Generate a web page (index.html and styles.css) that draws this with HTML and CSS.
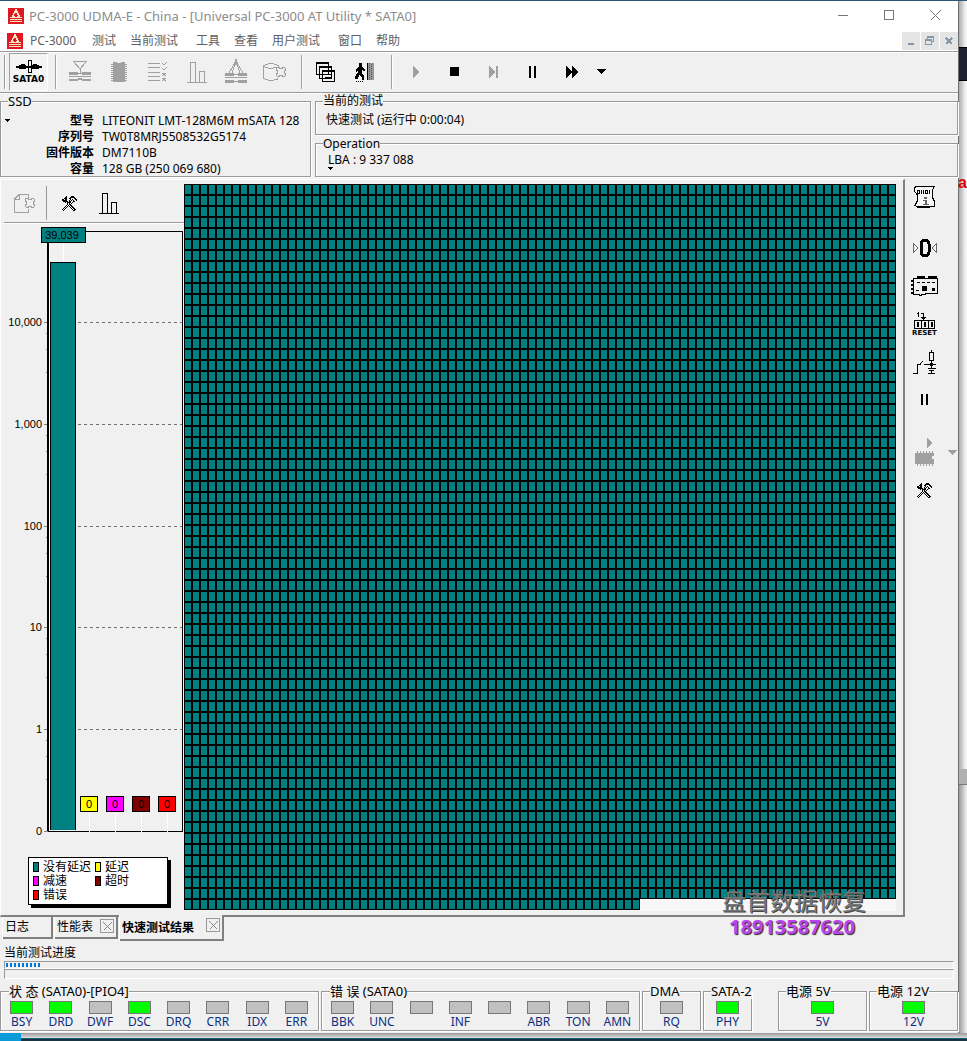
FILE: index.html
```html
<!DOCTYPE html>
<html lang="zh-CN">
<head>
<meta charset="utf-8">
<title>PC-3000 UDMA-E</title>
<link rel="stylesheet" href="styles.css">
</head>
<body>
<svg class="defs" aria-hidden="true">
  <symbol id="logo" viewBox="0 0 16 16">
    <path fill="#e01820" d="M0 0h16v16H0z"/>
    <path fill="none" stroke="#fbe6c8" stroke-width="1.6" d="M8 2L4.5 8.5M8 2l3.500 6.500M8 1v3"/>
    <path fill="#fbe6c8" d="M2 9h5v1H2zM9 9h5v1H9zM4 8h3v1H4zM9 8h3v1H9zM2 11h12v1H2zM2 13h12v1H2zM7 9h2v1H7z"/>
  </symbol>
  <symbol id="tools" viewBox="0 0 15 15">
    <path fill="none" stroke="currentColor" d="M4 .5h1M9 .5h3M3 1.500h2M8 1.500h5M2 2.500h3M7 2.500h2M12 2.500h2M0 3.500h2M3 3.500h2M8 3.500h1M10 3.500h1M13 3.500h2M0 4.500h5M7 4.500h1M9 4.500h1M11 4.500h1M14 4.500h1M1 5.500h5M7 5.500h2M11 5.500h2M3 6.500h1M5 6.500h4M10 6.500h1M5 7.500h1M7 7.500h1M9 7.500h1M5 8.500h1M7 8.500h2M4 9.500h1M6 9.500h1M8 9.500h2M3 10.500h1M5 10.500h1M7 10.500h1M9 10.500h2M2 11.500h1M4 11.500h1M8 11.500h1M10 11.500h2M1 12.500h1M3 12.500h1M9 12.500h1M11 12.500h2M0 13.500h1M2 13.500h1M10 13.500h1M12 13.500h2M1 14.500h1M11 14.500h2"/>
  </symbol>
  <symbol id="bars" viewBox="0 0 20 21">
    <path fill="none" stroke="currentColor" d="M0 20.500h20M3.500 20V.5h5V20M12.500 20V9.500h5V20"/>
  </symbol>
</svg>

<div class="desktop">
<div class="window">
  <header class="title">
    <svg class="logo"><use href="#logo"/></svg>
    <h1>PC-3000 UDMA-E - China - [Universal PC-3000 AT Utility * SATA0]</h1>
    <div class="caption">
      <button aria-label="Minimize"><svg width="11" height="11"><path d="M0 5.500h10"/></svg></button>
      <button aria-label="Maximize"><svg width="11" height="11"><path d="M.5.5h9v9h-9z"/></svg></button>
      <button aria-label="Close"><svg width="11" height="11"><path d="M.5.5l10 10M10.500.5l-10 10"/></svg></button>
    </div>
  </header>
  <nav class="menu">
    <svg class="logo"><use href="#logo"/></svg>
    <button class="app">PC-3000</button><button>测试</button><button class="long">当前测试</button><button>工具</button><button>查看</button><button class="long">用户测试</button><button>窗口</button><button>帮助</button>
    <div class="mdi">
      <button aria-label="Minimize child"><svg width="12" height="12"><path stroke-width="2" d="M3 9h6"/></svg></button>
      <button aria-label="Restore child"><svg width="12" height="12"><path d="M3.500 4V2.500h6v4H8M3 1.500h7M1.500 5.500h6v4h-6zM1 4.500h7"/></svg></button>
      <button aria-label="Close child"><svg width="12" height="12"><path stroke-width="2" d="M3 3l6 6M9 3L3 9"/></svg></button>
    </div>
  </nav>

  <div class="toolbar">
    <span class="grip"></span>
    <button class="port on">
      <svg width="26" height="13" viewBox="0 0 26 13"><path fill="#000" d="M0 6h26v2H0zM3 5h7v1H3zM3 8h7v1H3zM5 4h4v1H5zM16 5h7v1h-7zM16 8h7v1h-7zM17 4h4v1h-4zM12 0h1v13h-1zM15 0h1v13h-1zM12 0h4v1h-4zM12 12h4v1h-4z"/></svg>
      <span>SATA0</span>
    </button>
    <span class="sep"></span>
    <button class="off" aria-label="Heads"><svg width="24" height="22"><path fill="none" stroke="currentColor" d="M5 .5h14M6 1l6 7 6-7M12 8v4"/><path fill="currentColor" d="M1 11h9v3H1zM14 11h9v3h-9zM10 12h4v1h-4zM1 15h22v1H1zM1 18h9v2H1zM14 18h9v2h-9zM10 17h4v2h-4z"/></svg></button>
    <button class="off" aria-label="Chip"><svg width="18" height="22"><path fill="currentColor" d="M3 1h4v1h4V1h4v20H3z"/><path stroke="currentColor" stroke-dasharray="1 1" stroke-width="2" d="M2 3v17M16 3v17"/></svg></button>
    <button class="off" aria-label="Check list"><svg width="21" height="20"><path fill="none" stroke="currentColor" d="M1 1.500h12M1 5.500h12M1 10.500h12M1 14.500h12M1 18.500h12M15 1l2 2 3-3M15 6l2 2 3-3M15 11l4 3M19 11l-4 3M15 16l4 3M19 16l-4 3"/></svg></button>
    <button class="off" aria-label="Graph"><svg width="20" height="21"><use href="#bars"/></svg></button>
    <button class="off" aria-label="Compass"><svg width="24" height="26"><path fill="none" stroke="currentColor" d="M11 4L5 14M13 4l6 10M11.500 4L8 14M12.500 4L16 14"/><path fill="currentColor" d="M11 0h2v3h-2zM10 3h4v3h-4zM1 14h9v3H1zM14 14h9v3h-9zM10 15h4v1h-4zM1 18h22v1H1zM1 21h9v3H1zM14 21h9v3h-9zM10 22h4v1h-4z"/></svg></button>
    <button class="off" aria-label="Disk image"><svg width="25" height="18"><path fill="none" stroke="currentColor" d="M1.500 3v12c3 3 12 3 15 .5M1.500 3c3-3 12-3 15 0v1M1.500 3c3 3 9 3 12 1"/><path fill="#f0f0f0" stroke="currentColor" d="M14 5l2-1 3 2 3-2 2 2-2 3 2 3-2 2-3-2-3 2-2-2 2-3-2-3z"/></svg></button>
    <span class="sep"></span>
    <button aria-label="Windows"><svg width="20" height="20"><path fill="#f0f0f0" stroke="#000" d="M.5.5h12v12H.5zM3.500 4.500h12v12h-12zM6.500 8.500h12v11h-12z"/><path stroke="#000" stroke-width="2" d="M0 1h13M3 5h13M6 9h13"/><path stroke="#000" d="M9 12.500h7M9 15.500h7"/></svg></button>
    <button aria-label="Exit"><svg width="20" height="20"><path fill="#000" d="M4 1h3v4h1l2 3-1 1-2-1v3l2 3v4H7v-3l-3-2-1 4H0v-2l3-5V8L1 10V7l3-3z"/><path stroke="#000" stroke-dasharray="1 1" d="M1 19.500h8"/><path fill="#999" d="M12 1h7v17h-7z"/><path stroke="#000" d="M12.500 1v17"/><path stroke="#555" stroke-dasharray="1 1" d="M14.500 1v17M16.500 2v16"/></svg></button>
    <span class="sep"></span>
    <button class="off" aria-label="Start"><svg width="8" height="12"><path fill="currentColor" d="M1 0l6 6-6 6z"/></svg></button>
    <button aria-label="Stop"><svg width="10" height="10"><path fill="#000" d="M0 0h9v9H0z"/></svg></button>
    <button class="off" aria-label="Step"><svg width="10" height="12"><path fill="currentColor" d="M0 0l6 6-6 6zM7 0h2v12H7z"/></svg></button>
    <button aria-label="Pause"><svg width="8" height="12"><path fill="#000" d="M0 0h2v12H0zM5 0h2v12H5z"/></svg></button>
    <button aria-label="Skip"><svg width="12" height="12"><path fill="#000" d="M0 0l6 6-6 6zM6 0l6 6-6 6z"/></svg></button>
    <button class="drop" aria-label="More"><svg width="10" height="6"><path fill="#000" d="M0 0h10L5 5z"/></svg></button>
  </div>

  <section class="info">
    <fieldset class="drive">
      <legend class="latin">SSD</legend>
      <svg class="tri" width="6" height="4"><path d="M0 0h5L2.500 3z"/></svg>
      <dl>
        <dt>型号</dt><dd>LITEONIT LMT-128M6M mSATA 128</dd>
        <dt>序列号</dt><dd>TW0T8MRJ5508532G5174</dd>
        <dt>固件版本</dt><dd>DM7110B</dd>
        <dt>容量</dt><dd>128 GB (250 069 680)</dd>
      </dl>
    </fieldset>
    <div class="jobs">
      <fieldset><legend>当前的测试</legend><p>快速测试 (运行中 0:00:04)</p></fieldset>
      <fieldset><legend>Operation</legend><p class="lba">LBA : 9 337 088</p><svg class="tri" width="6" height="4"><path d="M0 0h5L2.500 3z"/></svg></fieldset>
    </div>
  </section>

  <div class="work">
    <main class="panel">
      <div class="side">
        <div class="subbar">
          <button class="off" aria-label="Clear"><svg width="22" height="19"><path fill="none" stroke="currentColor" d="M14.500 4V.5H5L.5 5v13.500h14V15M5.500.5v5H.5"/><path fill="#f0f0f0" stroke="currentColor" d="M11 5l2-1 3 2 3-2 2 2-2 3 2 3-2 2-3-2-3 2-2-2 2-3-2-3z"/></svg></button>
          <button class="tool" aria-label="Settings"><svg width="15" height="15"><use href="#tools"/></svg></button>
          <button aria-label="Graph"><svg width="20" height="21"><use href="#bars"/></svg></button>
        </div>
        <svg class="chart" width="181" height="620" viewBox="2 224 181 620" role="img">
          <path fill="none" stroke="#707070" stroke-dasharray="3 3" d="M78 322.500h104M78 424.500h104M78 526.500h104M78 627.500h104M78 729.500h104"/>
          <path fill="none" stroke="#808080" d="M44 322.500h4M44 424.500h4M44 526.500h4M44 627.500h4M44 729.500h4M44 831.500h4M46 333.500h2M46 349.500h2M46 372.500h2M46 435.500h2M46 451.500h2M46 474.500h2M46 537.500h2M46 553.500h2M46 576.500h2M46 638.500h2M46 654.500h2M46 677.500h2M46 740.500h2M46 756.500h2M46 779.500h2"/>
          <path fill="none" stroke="#000" d="M48 231.500h134.500v600H48"/>
          <path fill="#000" d="M47 231h2v600h-2z"/>
          <path fill="none" stroke="#fff" d="M63.500 243v19M89.500 812v20M115.500 812v20M141.500 812v20M167.500 812v20M49.500 244v586"/>
          <path fill="#008080" stroke="#000" d="M50.500 830V262.500h25V830"/>
          <g stroke="#000">
            <path fill="#008080" d="M41.500 227.500h44v15h-44z"/>
            <path fill="#ff0" d="M80.500 796.500h17v15h-17z"/>
            <path fill="#f0f" d="M106.500 796.500h17v15h-17z"/>
            <path fill="#800000" d="M132.500 796.500h17v15h-17z"/>
            <path fill="#f00" d="M158.500 796.500h17v15h-17z"/>
          </g>
          <g text-anchor="end"><text x="42" y="326">10,000</text><text x="42" y="428">1,000</text><text x="42" y="530">100</text><text x="42" y="631">10</text><text x="42" y="733">1</text><text x="42" y="835">0</text></g>
          <g text-anchor="middle"><text x="62" y="239">39,039</text><text x="89" y="808">0</text><text x="115" y="808">0</text><text x="141" y="808">0</text><text x="167" y="808">0</text></g>
        </svg>
        <ul class="legend">
          <li><i class="ok"></i>没有延迟</li><li><i class="delay"></i>延迟</li>
          <li><i class="slow"></i>减速</li><li><i class="timeout"></i>超时</li>
          <li><i class="error"></i>错误</li>
        </ul>
      </div>
      <div class="map">
        <div class="cells" style="--cols:89;--rows:65"></div>
        <div class="cells" style="--cols:57;--rows:1"></div>
      </div>
      <div class="mark"><b>盘首数据恢复</b><strong>18913587620</strong></div>
    </main>

    <div class="rail">
      <button class="first" aria-label="Info"><svg width="22" height="24"><path fill="#f8f8f8" stroke="#000" d="M2 1.500h18.500l-2 3v8l2 4v5H3l-2-1 2-4v-7L.5 6V3z"/><path fill="none" stroke="#000" d="M3.500 5.500h2v3h-2zM7.500 5v4M9.500 5v4M11.500 5.500h2v3h-2zM15.500 5v4M3 22.500h13"/><path fill="#666" d="M10 12h3v2h-3zM9 15h4v4h2v1H9v-1h2v-3H9z"/></svg></button>
      <button aria-label="Zero"><svg width="24" height="18"><path fill="none" stroke="#666" d="M.5 4.500v9l4.500-4.500zM23.500 4.500v9L19 9z"/><rect x="8" y="1" width="8" height="16" rx="4" fill="none" stroke="#000" stroke-width="3"/></svg></button>
      <button aria-label="Board"><svg width="28" height="20"><path fill="none" stroke="#000" d="M2.500 2.500h24v15h-12v1h-4v1h-2v-1h-6z"/><path stroke="#000" stroke-width="2" stroke-dasharray="2 2" d="M1 4v14"/><path fill="#000" d="M6 0h8v3H6zM17 0h9v3h-9zM11 10h5v5h-5zM21 12h3v3h-3z"/><path stroke="#000" stroke-dasharray="3 2" d="M6 6.500h18M5 14.500h4"/></svg></button>
      <button class="reset" aria-label="Reset"><svg width="22" height="18"><path fill="none" stroke="#000" d="M3 2.500l1.500-1v4M7 2.500h2.500V8M7.500 6l2 2 2-2M0 9.500h21M0 17.500h21M.5 9v9M7.500 9v9M14.500 9v9M20.500 9v9"/><path fill="none" stroke="#000" d="M3.500 11.500h1v4h-1zM10.500 11.500h1v4h-1zM17.500 11.500h1v4h-1z"/></svg><span>RESET</span></button>
      <button aria-label="Power"><svg width="24" height="24"><path fill="none" stroke="#000" d="M0 23.500h4.500v-9H7L10 11M11 14.500h12M18.500 0v3M16.500 2.500h4v8h-4zM18.500 10v8M14.500 18.500h8M16 20.500h5M18.500 20v4M15 23.500h7"/><path fill="#000" d="M17 13h3v3h-3z"/></svg></button>
      <button aria-label="Pause"><svg width="8" height="12"><path fill="#000" d="M0 0h2v11H0zM5 0h2v11H5z"/></svg></button>
      <button class="off chip" aria-label="Run chip"><svg width="20" height="28"><path fill="currentColor" d="M12 0l6 5-6 5zM0 15h19v3h-2v3h2v5H0z"/><path stroke="currentColor" stroke-width="2" stroke-dasharray="1 2" d="M2 14h16M2 27h16"/></svg><svg class="more" width="10" height="6"><path fill="currentColor" d="M0 0h9L4.500 5z"/></svg></button>
      <button aria-label="Settings"><svg width="15" height="15"><use href="#tools"/></svg></button>
    </div>
  </div>

  <div class="tabs">
    <div class="tab log"><button>日志</button></div>
    <div class="tab"><button>性能表</button><button class="x" aria-label="Close tab"><svg width="9" height="9"><path d="M.5.5l8 8M8.500.5l-8 8"/></svg></button></div>
    <div class="tab active"><button>快速测试结果</button><button class="x" aria-label="Close tab"><svg width="9" height="9"><path d="M.5.5l8 8M8.500.5l-8 8"/></svg></button></div>
  </div>

  <section class="progress">
    <p>当前测试进度</p>
    <div class="bar"><div class="fill" style="width:36px"></div></div>
    <div class="bar"></div>
  </section>

  <footer class="status">
    <fieldset class="eight"><legend class="latin">状 态 (SATA0)-[PIO4]</legend>
      <div class="led lit">BSY</div><div class="led lit">DRD</div><div class="led">DWF</div><div class="led lit">DSC</div><div class="led">DRQ</div><div class="led">CRR</div><div class="led">IDX</div><div class="led">ERR</div>
    </fieldset>
    <fieldset class="eight"><legend class="latin">错 误 (SATA0)</legend>
      <div class="led">BBK</div><div class="led">UNC</div><div class="led"></div><div class="led">INF</div><div class="led"></div><div class="led">ABR</div><div class="led">TON</div><div class="led">AMN</div>
    </fieldset>
    <fieldset class="dma"><legend class="latin">DMA</legend><div class="led">RQ</div></fieldset>
    <fieldset class="phy"><legend class="latin">SATA-2</legend><div class="led lit">PHY</div></fieldset>
    <fieldset class="power five"><legend class="latin">电源 5V</legend><div class="led lit">5V</div></fieldset>
    <fieldset class="power"><legend class="latin">电源 12V</legend><div class="led lit">12V</div></fieldset>
  </footer>
</div>
<aside class="behind"><div class="dark"></div><div class="page"><b>a</b></div><div class="scroll"></div><div class="rest"></div></aside>
</div>
<div class="taskbar"></div>
</body>
</html>
```

FILE: styles.css
```css
* { box-sizing: border-box; }
body {
  margin: 0;
  min-height: 100vh;
  display: flex;
  flex-direction: column;
  border-top: 1px solid #2f5574;
  background: #f0f0f0;
  color: #000;
  font: 12px/16px "Noto Sans", "Noto Sans CJK SC", sans-serif;
}
h1, p, dl, dd, ul { margin: 0; padding: 0; font-weight: normal; }
svg { display: block; flex: none; shape-rendering: crispEdges; }
.defs { position: absolute; width: 0; height: 0; }
button {
  display: flex; align-items: center; justify-content: center;
  padding: 0; border: 0; background: none; color: inherit; font: inherit;
}
.off { color: #a0a0a0; }
.desktop { flex: 1; display: flex; }
.window { flex: 1; min-width: 0; display: flex; flex-direction: column; border-right: 1px solid #707070; }

.title { display: flex; align-items: center; height: 29px; padding-left: 8px; background: #fff; color: #8c8c8c; }
.logo { width: 16px; height: 16px; }
.title h1 { flex: 1; margin-left: 5px; font-size: 13px; white-space: nowrap; }
.caption { display: flex; }
.caption button { width: 46px; height: 29px; }
.caption path { fill: none; stroke: #777; }
.menu { display: flex; align-items: center; gap: 14px; height: 21px; padding-left: 7px; background: #fff; color: #606060; }
.menu .logo { margin-right: -7px; }
.menu .app { min-width: 48px; justify-content: flex-start; }
.menu .long { min-width: 52px; justify-content: flex-start; }
.mdi { display: flex; gap: 1px; margin-left: auto; }
.mdi button { width: 18px; height: 18px; background: #e5e5e5; }
.mdi path { fill: none; stroke: #8497a8; }

.toolbar {
  display: flex; align-items: center; height: 42px;
  border-top: 1px solid #999; border-bottom: 1px solid #999;
  box-shadow: inset 0 1px #fff, 0 1px #fff;
}
.toolbar > button { width: 39px; height: 38px; }
.grip { width: 5px; height: 34px; margin-right: 4px; border-right: 1px solid #999; box-shadow: 1px 0 #fff; }
.sep { width: 12px; height: 34px; background: linear-gradient(90deg, #a0a0a0 1px, #fff 1px 2px, transparent 2px) 7px 0 no-repeat; }
.toolbar .on { flex-direction: column; gap: 0; border: 1px solid #fff; border-top-color: #a0a0a0; border-left-color: #a0a0a0; background: #f4f4f4; }
.port span { font: bold 9px/12px "DejaVu Sans", sans-serif; }
.toolbar .drop { width: 20px; }

.info { display: flex; gap: 4px; }
fieldset {
  position: relative; min-width: 0; margin: 0; padding: 0;
  border: 1px solid #999; box-shadow: inset 1px 1px #fff, 1px 1px #fff;
}
legend { height: 16px; margin-left: 7px; padding: 0; background: #f0f0f0; white-space: nowrap; }
.latin { font-size: 13px; }
.drive { width: 311px; height: 84px; padding-top: 4px; }
.drive dl { display: grid; grid-template-columns: 93px 1fr; column-gap: 8px; }
dt { text-align: right; font-weight: bold; }
dd { white-space: nowrap; }
.tri { position: absolute; left: 4px; top: 10px; }
.jobs { flex: 1; display: flex; flex-direction: column; gap: 1px; }
.jobs fieldset { flex: 1; }
.jobs p { padding: 3px 0 0 10px; }
.jobs .lba { padding: 0 0 0 12px; }
.jobs .tri { left: 12px; top: auto; bottom: 5px; }

.work { flex: 1; display: flex; margin-top: 2px; }
.panel {
  position: relative; flex: 1; display: flex; padding: 4px 0 4px 1px;
  border: solid #808080; border-width: 1px 2px 2px 1px;
  border-top-color: #fff; border-left-color: #fff;
}
.side { width: 182px; }
.subbar { display: flex; align-items: center; height: 39px; margin-left: 2px; border-bottom: 1px solid #999; box-shadow: 0 1px #fff; }
.subbar button { width: 42px; height: 34px; }
.subbar .tool { width: 46px; border-left: 1px solid #999; }
.subbar button:last-child { width: 34px; }
.chart { margin-top: 1px; }
.chart text { font: 11px "Liberation Sans", Arial, sans-serif; }
.legend {
  display: grid; grid-template-columns: 62px 1fr; grid-auto-rows: 14px;
  width: 140px; margin: 13px 0 0 26px; padding: 2px 4px;
  border: 1px solid #000; background: #fff; box-shadow: 3px 3px #000; list-style: none;
}
.legend li { display: flex; align-items: center; gap: 4px; line-height: 14px; white-space: nowrap; }
.legend i { width: 6px; height: 10px; border: 1px solid #000; }
.ok { background: #008080; }
.delay { background: #ff0; }
.slow { background: #f0f; }
.timeout { background: #800000; }
.error { background: #f00; }
.map { flex: 1; background: linear-gradient(#f8f8f8, #f8f8f8) 0 0 / 712px 100% no-repeat; }
.cells {
  width: calc(var(--cols) * 8px); height: calc(var(--rows) * 11px);
  background:
    repeating-linear-gradient(90deg, #000 0 1px, transparent 1px 7px, #000 7px 8px),
    repeating-linear-gradient(#000 0 1px, transparent 1px 10px, #000 10px 11px),
    #008080;
}
.mark { position: absolute; right: 37px; bottom: -24px; display: flex; flex-direction: column; align-items: center; }
.mark b { font: 24px/30px "Noto Sans CJK SC", sans-serif; color: #777; text-shadow: 1px 1px #444; }
.mark strong { font: bold 20px/24px "Noto Sans", sans-serif; margin-right: 4px; color: #b846ee; text-shadow: 1px 1px 1px #222; }

.rail { width: 53px; display: flex; flex-direction: column; align-items: flex-start; }
.rail button { position: relative; width: 39px; height: 38px; }
.rail .first { margin-bottom: 14px; height: 36px; }
.rail .reset { flex-direction: column; }
.reset span { font: bold 7px/8px "DejaVu Sans", sans-serif; }
.rail .chip { margin-top: 14px; }
.more { position: absolute; left: 43px; top: 17px; }

.tabs { display: flex; align-items: flex-start; gap: 2px; height: 24px; padding-left: 3px; }
.tab { display: flex; gap: 7px; height: 22px; padding: 0 2px; border: solid #808080; border-width: 0 2px 2px 0; box-shadow: -1px 0 #fff; }
.tab.log { width: 50px; }
.tab.active { position: relative; margin-top: -2px; height: 26px; padding: 1px 2px 0 2px; gap: 12px; background: #f0f0f0; font-weight: bold; }
.x { width: 14px; height: 14px; margin-top: 2px; border: 1px solid #999; }
.x path { stroke: #888; }

.progress { padding: 4px 4px 0; }
.bar { height: 8px; border: 1px solid #fff; border-top-color: #999; border-left-color: #999; }
.bar + .bar { height: 10px; }
.fill { height: 4px; margin: 1px; background: repeating-linear-gradient(90deg, #0078d7 0 2px, transparent 2px 4px); }

.status { display: flex; gap: 2px; padding: 4px 0 2px; }
.status fieldset { display: flex; height: 48px; padding-top: 2px; }
.status .eight { flex: 319 1 319px; padding: 2px 2px 0 1px; }
.dma { flex: 59 1 59px; }
.phy { flex: 49 1 49px; }
.power { flex: 89 1 89px; }
.five { margin-left: 24px; }
.led { flex: 1; display: flex; flex-direction: column; align-items: center; color: #0a2f80; }
.led::before { content: ""; width: 21px; height: 11px; flex: none; border: 1px solid #777; background: #c0c0c0; }
.led.lit::before { background: #0f0; }

.behind { width: 8px; display: flex; flex-direction: column; background: linear-gradient(90deg, #aaa, #eee 6px, #f8f8f8); }
.dark { height: 34px; margin-top: 46px; background: #1e2030; border: solid #000; border-width: 1px 0; }
.page { flex: 1; padding-top: 92px; }
.page b { display: block; margin-left: -1px; font: bold 16px/20px "Liberation Sans", Arial, sans-serif; color: #e00000; }
.scroll { height: 16px; background: #b0b0b0; border-bottom: 1px solid #777; }
.rest { height: 248px; background: linear-gradient(90deg, #999, #ddd 6px, #eee); }
.taskbar { height: 8px; background: linear-gradient(90deg, #0a9ad8 21px, transparent 21px), linear-gradient(#999, #ddd 5px, #18607c 5px 6px, #183440 6px); }
```
